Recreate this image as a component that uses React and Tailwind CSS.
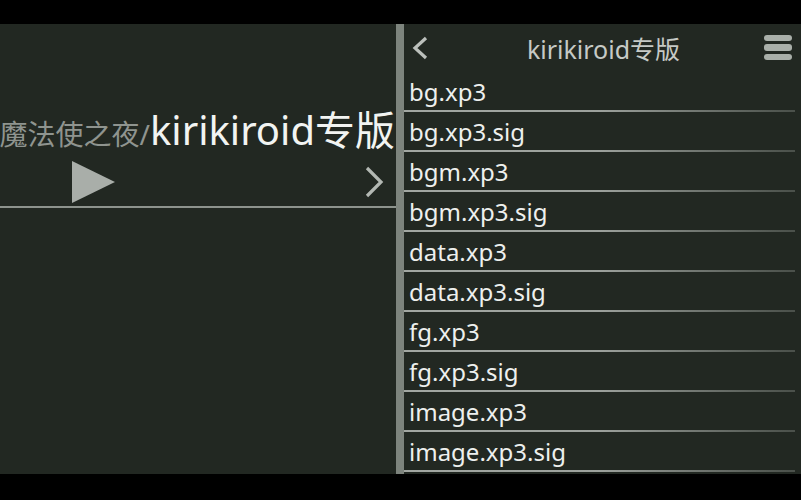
import React from "react";

const files = [
  "bg.xp3",
  "bg.xp3.sig",
  "bgm.xp3",
  "bgm.xp3.sig",
  "data.xp3",
  "data.xp3.sig",
  "fg.xp3",
  "fg.xp3.sig",
  "image.xp3",
  "image.xp3.sig",
];

const font = { fontFamily: '"Noto Sans", "Noto Sans CJK SC", sans-serif' };

const App = () => {
  return (
    <div className="w-[801px] h-[500px] bg-black flex flex-col overflow-hidden" style={font}>
      <div className="h-[24px] shrink-0" />
      <div className="h-[450px] flex bg-[#222822]">
        {/* left panel */}
        <div className="w-[396px] shrink-0 flex flex-col">
          <div className="h-[182px] flex flex-col justify-end">
            <div className="flex justify-end items-baseline whitespace-nowrap overflow-hidden leading-none pr-[1px]">
              <span className="text-[28px] text-[#8f948f] shrink-0">魔法使之夜/</span>
              <span className="text-[40px] text-[#f2f4f2] shrink-0">kirikiroid专版</span>
            </div>
            <div className="h-[56px] flex items-center justify-between pl-[72px] pr-[12px] pt-[8px]">
              <svg width="43" height="42" viewBox="0 0 43 42">
                <polygon points="0,0 43,21 0,42" fill="#a9aea9" />
              </svg>
              <svg width="20" height="32" viewBox="0 0 20 32">
                <polyline points="3,2 17,16 3,30" fill="none" stroke="#b3b8b3" strokeWidth="3.2" />
              </svg>
            </div>
          </div>
          <div className="h-[2px] bg-[#8d938d]" />
        </div>
        {/* divider */}
        <div className="w-[8px] shrink-0 bg-[#7d847d]" />
        {/* right panel */}
        <div className="flex-1 flex flex-col">
          <div className="h-[48px] flex items-center pl-[7px] pr-[9px]">
            <svg width="18" height="24" viewBox="0 0 18 24">
              <polyline points="15,2 4,12 15,22" fill="none" stroke="#bcc0bc" strokeWidth="3.2" />
            </svg>
            <span className="flex-1 text-center text-[25px] text-[#c6cac6] leading-none pl-[14px] pt-[2px]">
              kirikiroid专版
            </span>
            <div className="w-[28px] flex flex-col gap-[3px] pb-[2px]">
              <div className="h-[6px] rounded-[3px] bg-[#a9afa9]" />
              <div className="h-[7px] rounded-[3px] bg-[#a9afa9]" />
              <div className="h-[6px] rounded-[3px] bg-[#a9afa9]" />
            </div>
          </div>
          {files.map((f) => (
            <div key={f} className="h-[40px] flex flex-col">
              <div className="flex-1 flex items-center pl-[5px] pt-[2px] text-[24px] leading-none text-[#eef0ee]">
                {f}
              </div>
              <div className="h-[2px] mr-[6px] bg-gradient-to-r from-[#a2a7a2] via-[#9ca19c] to-[#4a504a]" />
            </div>
          ))}
        </div>
      </div>
    </div>
  );
};

export default App;
